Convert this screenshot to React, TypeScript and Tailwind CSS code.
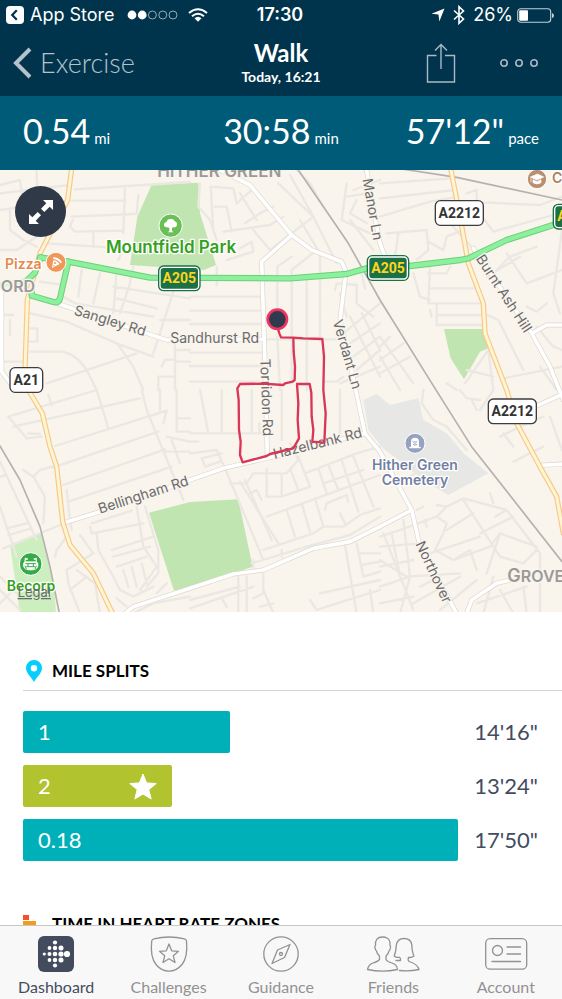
import type { ReactNode } from "react"
import clsx from "clsx"

const splits = [
    { label: "1", time: "14'16\"", seconds: 207, best: false },
    { label: "2", time: "13'24\"", seconds: 149, best: true },
    { label: "0.18", time: "17'50\"", seconds: 435, best: false },
]

const longest = Math.max(...splits.map((s) => s.seconds))

const stats = [
    { value: "0.54", unit: "mi" },
    { value: "30:58", unit: "min" },
    { value: "57'12\"", unit: "pace" },
]

// Small residential streets, one entry per map tile
const tiles = [
    {
        x: 0,
        y: 0,
        d: "M0 70L210 45M225 58L570 36M0 45L60 30L70 110L0 120M110 0V25L115 75L75 110M215 92H375M375 50L370 190M215 140L405 132M415 75L410 132M218 150L210 170L225 185L370 182M280 185V230M140 220L370 235L355 270M30 120V180L70 210L110 230M0 240H50L110 200M400 290L390 340L360 430M245 300L235 380M300 310L280 400M350 300L340 430M340 350L570 385M350 385L470 415M190 380L225 400L460 440M520 365L460 550M90 430L200 455L350 520L460 560M90 545H190Q240 560 265 610L290 660M140 640L410 550M355 525L400 590L430 660M525 520V660M525 620H475V660M0 435H40M30 450V495M80 475H112V515H80M120 335L190 345M0 575H70M525 540H570M525 575H570M485 590L495 570L525 568M480 450H570",
    },
    {
        x: 570,
        y: 0,
        d: "M30 40L25 110L60 150L80 210M62 50L130 55L140 100M75 110H110L125 185M62 50L70 180L80 210M150 70L200 150M165 160L210 130L250 110M100 185L240 165L280 140M185 60L140 100M190 180L240 240M110 270L190 245L185 215L150 235M300 15L370 140L440 280M265 40L370 140M240 240L370 140M262 420V290L305 260M305 640V300L380 240M262 500L270 660M330 150L390 250V500M350 330V660M0 380H210M0 422H210M0 462H210M0 548H215M0 588H215M225 508H440M0 635H210M320 0L360 40L400 110M470 40L455 150L540 190M470 80L530 70M490 60L570 30M480 150L550 240M500 90L480 130L530 160M435 360L440 340L500 345V400L550 440M450 370L470 440M80 290V345M510 290L525 355M460 490L570 400M480 520L570 460M490 560L570 500M500 600L570 540M480 440L570 620M450 640L570 590M515 430L570 540M400 635H440L460 620",
    },
    {
        x: 1140,
        y: 0,
        d: "M0 40L215 25M0 85L225 60M0 140L150 95L235 80M260 95L480 105L546 80M260 70L290 60V100M285 110L340 185L520 135M20 190L140 180L145 240L110 270M55 190L45 260M145 215L190 240L200 200L250 180M210 160L310 270M100 310L120 380L150 390M150 290L145 400M145 310H200L210 290M150 355H290M150 400H300M170 400V465H310M170 435H310M150 420L155 440M380 250L440 340L546 300M350 300L390 260L470 230M320 320L420 260M546 180L520 370L540 430M440 410L470 425L500 400M310 430L355 450L430 600M370 625L546 590M255 640L325 540L340 660M0 500L100 640M0 560L60 660M0 610L90 560M0 570L70 520M0 530L30 500M470 470L520 530L546 540M480 590L530 660M260 600L340 620M200 640L230 660",
    },
    {
        x: 0,
        y: 660,
        d: "M145 15L155 45M25 80L290 0M25 80L80 145L125 140M40 110L420 25M85 130L120 132M290 0L325 115M425 0L440 60L550 330M165 168L500 62L490 100M480 0V60M160 232L475 125M70 240L100 260L120 240L165 228M190 285L495 178M205 335L515 230M200 300L205 350L215 420M100 260L135 320L130 400M0 215L110 450M0 260L20 255M0 350L50 500M20 415L80 400M25 435L95 415M10 475L180 405M530 0V125H570M530 85H570M500 140L570 155M515 150L540 220M490 185H570M275 400L395 362M270 410L275 430L430 400M290 430L295 480L340 560L360 600L400 620L460 590M410 350L430 470L470 530L420 600M435 350L475 480V550L440 590M340 500L450 470M350 530L440 500M370 540L385 590M395 530L410 590M425 520L440 580M335 480L460 440M240 435L280 490L200 540L205 580L240 670M230 540L285 580L300 670M200 440L170 480L165 500M210 600L260 560M0 560L50 610M0 640L40 600M0 600L60 660M350 625L380 650M470 610L500 580M400 670L460 640L570 620",
    },
    {
        x: 570,
        y: 660,
        d: "M30 0L55 130M95 0V130M185 0V130M0 130H215M275 0V150M450 0V140M208 100V125M0 155H25M0 190L80 180L120 270L220 510M35 205L45 230L90 215M35 205L95 190M120 280H170L190 250H290L325 210L300 160M230 235V320H275V250M275 320L360 290L325 200M300 235L325 300M345 250L500 190L570 170M150 275L265 460M165 270L245 450M180 310L200 300L215 330M385 235L410 310M415 225L445 300M455 210L505 365M490 200L550 350M400 280L520 240M230 380L420 310L570 255M290 360L315 440M335 340L360 425M375 325L400 410M405 360L410 340L470 315L475 335M220 480L370 430L400 410L460 410L510 375L570 355M185 520L350 470L480 435L570 380M275 480V500M450 370L465 400M190 510V535M465 465L500 670M500 460L520 560L570 545M510 490H570M515 525L570 515M390 610L570 570M145 560V670M170 560V670M220 550V600L250 670M0 630L150 590M0 655L190 590M95 625L110 650M220 610L190 625M440 640L570 600M250 640L210 650M360 630L380 660L440 640M540 600L550 670",
    },
    {
        x: 1140,
        y: 660,
        d: "M130 0L125 40L160 90L200 110L260 180M0 70L60 80M240 0L260 25L300 30M340 0L300 60M275 30L290 60M360 140L420 110L490 80M370 130L400 170M400 215L490 170M510 80L546 180M0 440L60 420L170 380L200 350L250 325L380 360L480 490V670M170 380L200 400L190 430L165 480L220 510L330 470L360 430L470 470M250 330L360 500M200 420L280 370M345 380L380 360M220 510L270 480L290 540M300 430L400 380M360 500L430 520L470 480M360 430L320 550M330 310L340 340M110 360L130 350M60 280L150 220M0 510L80 560L240 550M10 430L100 660M35 430L60 560M70 390L90 560M0 470L120 460M0 530L100 510M150 490L300 440M0 590L90 560L60 670M100 640L240 560M120 590L180 560M180 660L290 570M340 560L310 670M290 640L440 590M360 600L400 670M430 590L440 670M0 640L100 620M170 345L195 350M135 390L140 410",
    },
]

const railways = [
    "M895 0L1045 220L1140 390L1305 655L1415 830L1686 1175",
    "M1200 -4L1370 22L1686 90",
    "M-5 820L60 930L120 1070L150 1190L178 1330",
]

const whiteRoads = [
    "M650 -5L750 45L875 195L935 240L1025 275L1038 305L1020 450L1065 650L1095 790L1140 845L1235 1020L1260 1130L1370 1330",
    "M875 195L785 275L795 580L802 860",
    "M170 400L500 510L600 508L785 508",
    "M5 360V605L35 645",
    "M188 1060L290 1028L570 930L670 895L820 860L1095 790",
    "M375 1330L400 1310L570 1255L700 1212L790 1200L940 1135L1050 1115L1140 1070L1235 1020",
    "M1400 1330L1415 1290L1490 1240L1530 1230",
    "M1420 235L1595 490L1650 590L1690 690M1595 490L1640 465H1690",
    "M1600 712L1690 672M1620 886L1690 882",
    "M1100 0L1115 90L1140 220L1170 300",
]

const yellowRoads = [
    "M215 -5L203 90L120 250L82 390L75 600L85 660L127 730L150 830L170 890L188 1055L210 1125L280 1210L340 1335",
    "M1352 -5L1380 140L1405 280L1450 400L1455 490L1520 660L1550 760L1620 890L1670 980L1690 1090",
]

const greenRoads = [
    "M120 262L205 275L450 323L870 325L1040 312L1110 292L1230 288L1380 270L1405 265L1520 210L1690 155",
    "M205 275L180 385Q176 400 160 396L95 377V365",
    "M122 262L105 308L80 332",
]

const route =
    "M832 470L838 490L843 502L880 503L881 545L885 590L884 630L878 635L855 640L850 645L790 641L720 642L712 655L716 690L717 780L722 815L720 855L728 877L800 858L810 852L880 835L897 805L893 750L895 700L891 642L929 642L934 668L935 740L940 780L937 815L973 818L977 730L970 660L972 560L967 507L910 505L880 503"

function Shield({ x, y, w, text, green }: { x: number; y: number; w: number; text: string; green?: boolean }) {
    return (
        <g transform={`translate(${x} ${y})`}>
            <rect width={w} height="74" rx="15" fill={green ? "#1c7046" : "#fff"} stroke={green ? "#1c7046" : "#3c3c40"} strokeWidth="4" />
            {green && <rect x="4" y="4" width={w - 8} height="66" rx="11" fill="none" stroke="#fff" strokeWidth="4" />}
            <text
                x={w / 2}
                y="51"
                textAnchor="middle"
                fontSize="42"
                fontWeight="700"
                fontFamily="Roboto, sans-serif"
                fill={green ? "#ffd51c" : "#333"}
            >
                {text}
            </text>
        </g>
    )
}

function RouteMap() {
    return (
        <svg viewBox="0 0 1686 1326" className="block h-auto w-full bg-[#f9f4ec]" role="img" aria-label="Walk route">
            {/* Parks and cemetery */}
            <path d="M455 44L595 38L600 130L648 285L612 300L390 285L412 140Z" fill="#c1e5b0" />
            <path d="M1332 477H1448L1465 535L1440 545L1392 628L1352 565Z" fill="#c1e5b0" />
            <path d="M447 1028L570 996L715 988L758 1190L570 1252L522 1262Z" fill="#c1e5b0" />
            <path d="M30 1125L125 1090L162 1240L168 1330H60Z" fill="#cdefc0" />
            <path d="M1090 690L1130 672L1170 705L1255 685L1270 750L1340 790L1390 850L1465 910L1345 975L1270 930L1150 835L1105 780Z" fill="#e7e7e5" />

            <g fill="none" strokeLinecap="round" strokeLinejoin="round">
                {tiles.map((t) => (
                    <path key={`${t.x}-${t.y}`} d={t.d} transform={`translate(${t.x} ${t.y})`} stroke="#ebe8e3" strokeWidth="7" />
                ))}
                {railways.map((d) => (
                    <path key={d} d={d} stroke="#b4b2b0" strokeWidth="5" />
                ))}
                <g stroke="#dcd7cf" strokeWidth="15">
                    {whiteRoads.map((d) => (
                        <path key={d} d={d} />
                    ))}
                </g>
                <g stroke="#fff" strokeWidth="11">
                    {whiteRoads.map((d) => (
                        <path key={d} d={d} />
                    ))}
                </g>
                <g stroke="#f6c88d" strokeWidth="16">
                    {yellowRoads.map((d) => (
                        <path key={d} d={d} />
                    ))}
                </g>
                <g stroke="#fff5ce" strokeWidth="9">
                    {yellowRoads.map((d) => (
                        <path key={d} d={d} />
                    ))}
                </g>
                <path d="M-5 345L80 332" stroke="#d3f5d3" strokeWidth="18" />
                <g stroke="#6bd07d" strokeWidth="19">
                    {greenRoads.map((d) => (
                        <path key={d} d={d} />
                    ))}
                </g>
                <g stroke="#8df09c" strokeWidth="13">
                    {greenRoads.map((d) => (
                        <path key={d} d={d} />
                    ))}
                </g>
            </g>

            {/* Street and place names */}
            <g
                fontFamily="Inter, sans-serif"
                fontSize="42"
                fontWeight="400"
                fill="#6b6b6d"
                stroke="#f9f4ec"
                strokeWidth="8"
                strokeLinejoin="round"
                paintOrder="stroke"
                textAnchor="middle"
            >
                <text transform="translate(326 466) rotate(17)">Sangley Rd</text>
                <text x="644" y="519">Sandhurst Rd</text>
                <text transform="translate(785 683) rotate(88)">Torridon Rd</text>
                <text transform="translate(1028 557) rotate(74)">Verdant Ln</text>
                <text transform="translate(1104 120) rotate(80)">Manor Ln</text>
                <text transform="translate(1500 378) rotate(57)">Burnt Ash Hill</text>
                <text transform="translate(434 988) rotate(-18)">Bellingham Rd</text>
                <text transform="translate(956 834) rotate(-14)">Hazelbank Rd</text>
                <text transform="translate(1288 1212) rotate(65)">Northover</text>
                <g fill="#9b9a99" fontWeight="600">
                    <text x="658" y="22" fontSize="51">HITHER GREEN</text>
                    <text x="54" y="367" fontSize="48">ORD</text>
                    <text x="1522" y="1237" fontSize="54" textAnchor="start">
                        G<tspan fontSize="48">ROVE</tspan>
                    </text>
                </g>
                <g fill="#35a01e" stroke="#fff" fontWeight="600">
                    <text x="513" y="250" fontSize="51">Mountfield Park</text>
                    <text x="93" y="1264">Becorp</text>
                </g>
                <g fill="#72809f" stroke="#fff" fontWeight="600">
                    <text x="1245" y="900">Hither Green</text>
                    <text x="1245" y="945">Cemetery</text>
                </g>
                <text x="70" y="296" fill="#e5894a" stroke="#fff" fontWeight="600">Pizza</text>
                <text x="1656" y="40" fill="#a9815d" stroke="#fff" fontWeight="600" textAnchor="start">Co</text>
                <text x="103" y="1281" fontSize="39" stroke="none" textDecoration="underline">Legal</text>
            </g>

            <Shield x={476} y={288} w={124} text="A205" green />
            <Shield x={1102} y={257} w={124} text="A205" green />
            <Shield x={1660} y={103} w={124} text="A205" green />
            <Shield x={1306} y={92} w={144} text="A2212" />
            <Shield x={1465} y={687} w={144} text="A2212" />
            <Shield x={30} y={593} w={98} text="A21" />

            {/* Park */}
            <g transform="translate(512 167)">
                <circle r="35" fill="#6abf57" stroke="#fff" strokeWidth="3" />
                <path d="M-4 6L-12 5Q-22 3-20-5Q-18-11-12-11Q-11-20-1-20Q9-22 12-13Q20-11 19-3Q18 5 8 5L4 7V16L9 20H-9L-4 16Z" fill="#fff" />
            </g>
            {/* Pizza slice */}
            <g transform="translate(168 277)">
                <circle r="30" fill="#f0975a" stroke="#fff" strokeWidth="3" />
                <path d="M-9-15Q10-15 18 0L14 3Q5-9-8-10ZM-8-6Q4-5 11 5L-12 17Z" fill="#fff" />
                <circle cx="-3" cy="2" r="3" fill="#f0975a" />
                <circle cx="-6" cy="10" r="2" fill="#f0975a" />
            </g>
            {/* Stadium */}
            <g transform="translate(92 1182)">
                <circle r="34" fill="#35ab48" stroke="#fff" strokeWidth="3" />
                <path d="M-17-18L-8-15L-17-12V-7H17V-12L9-15L17-18V-7Q23-5 22 5Q20 18 0 18Q-20 18-22 5Q-23-5-17-7Z" fill="#fff" stroke="#fff" strokeWidth="2" />
                <path d="M-16-1H16M-13 8H13M-8 0V8M8 0V8M-17 5L-13 15M17 5L13 15" fill="none" stroke="#35ab48" strokeWidth="3" />
            </g>
            {/* Tombstone */}
            <g transform="translate(1245 820)">
                <circle r="30" fill="#96a2c1" stroke="#fff" strokeWidth="3" />
                <path d="M-17 15V10H-12V-5Q-12-17 0-17Q12-17 12-5V10H17V15Z" fill="#fff" />
                <path d="M-7-6L-3-3M7-6L3-3M-6 3Q0 8 6 3M0-7V2" stroke="#96a2c1" strokeWidth="3" fill="none" />
            </g>
            {/* College */}
            <g transform="translate(1611 27)">
                <circle r="29" fill="#b98f6d" stroke="#fff" strokeWidth="3" />
                <path d="M-20-6L2-15L20-6L0 3ZM-12 2V11Q0 19 12 11V2L0 8ZM-18-3V10" fill="#fff" stroke="#fff" strokeWidth="2" />
            </g>

            <path d={route} fill="none" stroke="#d93658" strokeWidth="7" strokeLinejoin="round" strokeLinecap="round" />
            <circle cx="832" cy="448" r="29" fill="#2f3b4c" stroke="#ef3363" strokeWidth="8" />
        </svg>
    )
}

function StatusBar() {
    return (
        <div className="grid h-[30px] grid-cols-[1fr_auto_1fr] items-center pr-2 pl-1.5 font-['Inter',sans-serif] text-lg leading-none text-white">
            <div className="flex items-center">
                <a href="#app-store" className="flex items-center gap-1.5">
                    <svg viewBox="0 0 18 18" className="size-[18px]">
                        <rect width="18" height="18" rx="4" fill="#fff" />
                        <path d="M10.8 4.2L6.2 9L10.8 13.8" fill="none" stroke="#00344d" strokeWidth="2.2" />
                    </svg>
                    App Store
                </a>
                <svg viewBox="0 0 51 10" className="ml-3 h-2.5 w-[51px]">
                    {[5, 15.2, 25.4, 35.8, 46].map((cx, i) => (
                        <circle key={cx} cx={cx} cy="5" r={i < 2 ? 4.4 : 4} fill={i < 2 ? "#fff" : "none"} stroke="#b7c6ce" strokeWidth={i < 2 ? 0 : 0.8} />
                    ))}
                </svg>
                <svg viewBox="0 0 20 14" className="ml-2.5 h-3.5 w-5" fill="none" stroke="#fff" strokeWidth="2">
                    <path d="M1 5Q10-2.500 19 5M4 8.300Q10 3.300 16 8.300" />
                    <path d="M6.500 10.300Q10 7.300 13.500 10.300L10 13.800Z" fill="#fff" stroke="none" />
                </svg>
            </div>
            <span className="px-1 font-semibold">17:30</span>
            <div className="flex items-center justify-end">
                <svg viewBox="0 0 14 14" className="size-3.5" fill="#fff">
                    <path d="M13.500 .5L8.300 13.500L7.500 6.600L.5 5.800Z" />
                </svg>
                <svg viewBox="0 0 12 20" className="ml-2 h-5 w-3" fill="none" stroke="#fff" strokeWidth="1.6">
                    <path d="M1 5.500L10.500 14L6 18.300V1.700L10.500 6L1 14.500" />
                </svg>
                <span className="ml-2">26%</span>
                <svg viewBox="0 0 37 15" className="ml-1 h-[15px] w-[37px]">
                    <rect x=".7" y=".7" width="33" height="13.600" rx="3" fill="none" stroke="#c3d0d6" strokeWidth="1.1" />
                    <rect x="2.200" y="2.200" width="8.800" height="10.600" rx="1" fill="#fff" />
                    <path d="M35 5Q37 5.500 37 7.500T35 10Z" fill="#c3d0d6" />
                </svg>
            </div>
        </div>
    )
}

function NavBar() {
    return (
        <div className="grid h-[66px] grid-cols-[1fr_auto_1fr] items-center px-3 text-white">
            <button type="button" className="flex items-center gap-2 text-[27px] leading-8 font-light text-[#b3c2cb]">
                <svg viewBox="0 0 20 32" className="h-8 w-5" fill="none" stroke="currentColor" strokeWidth="4">
                    <path d="M18 2L4 16L18 30" />
                </svg>
                Exercise
            </button>
            <div className="text-center">
                <h1 className="text-2xl leading-7 font-bold">Walk</h1>
                <p className="text-sm leading-5 font-bold">Today, 16:21</p>
            </div>
            <div className="flex items-center justify-end gap-11 pr-3 text-[#a9bac5]">
                <button type="button" aria-label="Share">
                    <svg viewBox="0 0 30 40" className="h-10 w-[30px]" fill="none" stroke="currentColor" strokeWidth="1.4">
                        <path d="M10.500 12.500H1.500V39H28.500V12.500H19M15 26V1.500M9 7.500L15 1.500L21 7.500" />
                    </svg>
                </button>
                <button type="button" aria-label="More">
                    <svg viewBox="0 0 38 10" className="h-2.5 w-[38px]" fill="none" stroke="currentColor" strokeWidth="1.6">
                        <circle cx="4" cy="5" r="3.200" />
                        <circle cx="19" cy="5" r="3.200" />
                        <circle cx="34" cy="5" r="3.200" />
                    </svg>
                </button>
            </div>
        </div>
    )
}

function Splits() {
    return (
        <section className="pt-11 pl-[23px]">
            <div className="border-b border-[#d3d4d6] pb-1">
                <h2 className="flex h-[30px] items-center gap-2.5 text-[17px] font-bold text-black">
                    <svg viewBox="0 0 16 22" className="ml-[3px] h-[22px] w-4">
                        <path d="M8 0a8 8 0 0 1 8 8C16 13.500 10.500 17 8 22C5.500 17 0 13.500 0 8A8 8 0 0 1 8 0ZM8 5a3.200 3.200 0 1 0 0 6.400A3.200 3.200 0 1 0 8 5Z" fill="#05cdfc" fillRule="evenodd" />
                    </svg>
                    MILE SPLITS
                </h2>
            </div>
            <ol className="mt-5 flex flex-col gap-3 pr-6 text-[22px] leading-none">
                {splits.map((s) => (
                    <li key={s.label} className="flex items-center gap-4">
                        <div className="flex-1">
                            <div
                                className={clsx(
                                    "flex h-[42px] items-center justify-between rounded-xs px-[15px] text-white",
                                    s.best ? "bg-[#b1c430]" : "bg-[#00b0b9]"
                                )}
                                style={{ width: `${(s.seconds / longest) * 100}%` }}
                            >
                                {s.label}
                                {s.best && (
                                    <svg viewBox="0 0 28 27" className="h-[27px] w-7" fill="#fff" stroke="#fff" strokeLinejoin="round">
                                        <path d="M14 1L17.600 9.900L27.200 10.600L19.800 16.600L22.200 26L14 21L5.800 26L8.200 16.600L.8 10.600L10.400 9.900Z" />
                                    </svg>
                                )}
                            </div>
                        </div>
                        <span className="w-16 text-right text-[#434c5e]">{s.time}</span>
                    </li>
                ))}
            </ol>
        </section>
    )
}

const tabs: { label: string; icon: ReactNode }[] = [
    {
        label: "Dashboard",
        icon: (
            <>
                <rect x="6" width="36" height="36" rx="6" fill="#434c5e" stroke="none" />
                <g fill="#fff" stroke="none">
                    <circle cx="12.300" cy="18" r="1.600" />
                    <circle cx="17.500" cy="12" r="1.900" />
                    <circle cx="17.500" cy="18" r="2" />
                    <circle cx="17.500" cy="24" r="1.900" />
                    <circle cx="23" cy="6.500" r="2.100" />
                    <circle cx="23" cy="12" r="2.200" />
                    <circle cx="23" cy="18" r="2.300" />
                    <circle cx="23" cy="24" r="2.200" />
                    <circle cx="23" cy="29.500" r="2.100" />
                    <circle cx="29" cy="12" r="2.500" />
                    <circle cx="29" cy="18" r="2.600" />
                    <circle cx="29" cy="24" r="2.500" />
                    <circle cx="35" cy="18" r="3.100" />
                </g>
            </>
        ),
    },
    {
        label: "Challenges",
        icon: (
            <>
                <path d="M6.700 5Q7 3.300 9 2.800Q24-.8 39.500 2.800Q41.300 3.300 41.500 5Q43 21 37 28.500Q31.500 35.200 24 35.200T11 28.500Q5 21 6.700 5Z" />
                <path d="M24 8L26.700 14.800L33.500 15.300L28.300 19.800L30 26.500L24 22.800L18 26.500L19.700 19.800L14.500 15.300L21.300 14.800Z" />
            </>
        ),
    },
    {
        label: "Guidance",
        icon: (
            <>
                <circle cx="24" cy="18" r="17.200" />
                <path d="M33 8.500L20.500 14L15 27.500L27.500 21.500Z" />
                <circle cx="24" cy="18" r="1.500" />
            </>
        ),
    },
    {
        label: "Friends",
        icon: (
            <>
                <path d="M13.500 1C8.500 1 6 4 6.500 9.500Q5.300 10 6.200 12.500Q6.500 14.500 7.500 14.800Q8 18 10.500 20V23.500Q9 25.500 4 27Q-.5 28.500-1.500 33.500Q6 35.200 13.500 35.200Q21 35.200 28.500 33.500Q28 28.500 23 27Q18 25.500 17 23.500V20Q19.500 18 20 14.800Q21 14.500 21.300 12.500Q22 10 21 9.500Q21.500 4 18 2Q16.500 1 13.500 1Z" />
                <path d="M27 24.500H31.500Q32 22.500 30.500 21.300Q27 21.800 25.200 20Q27 16 27.300 9Q28.500 2.500 35 2.500Q42 2.500 42.800 9Q43 16 45 20Q42.500 22 39.500 21.300Q38.500 24 40 25.500Q48.500 28 50 33.500Q41 35.500 30.500 34.500" />
            </>
        ),
    },
    {
        label: "Account",
        icon: (
            <>
                <rect x="3.700" y="2.700" width="41" height="30.500" rx="4.500" />
                <circle cx="15.500" cy="14.500" r="5" />
                <path d="M25 11H38.500M25 18H38.500M10 25.500H38.500" />
            </>
        ),
    },
]

export default function App() {
    return (
        <div className="flex h-screen flex-col bg-white font-['Lato',sans-serif]">
            <header className="bg-[#00344d]">
                <StatusBar />
                <NavBar />
            </header>

            <dl className="grid h-[74px] shrink-0 grid-cols-[1fr_auto_1fr] items-center bg-[#005b79] px-[23px] pb-1 text-white">
                {stats.map((s) => (
                    <div key={s.unit} className="flex items-baseline gap-1 last:justify-self-end">
                        <dd className="text-[34px] leading-10">{s.value}</dd>
                        <dt className="text-[15px]">{s.unit}</dt>
                    </div>
                ))}
            </dl>

            <main className="min-h-0 flex-1 overflow-y-auto [scrollbar-width:none]">
                <div className="relative">
                    <RouteMap />
                    <button
                        type="button"
                        aria-label="Expand map"
                        className="absolute top-4 left-[15px] flex size-[51px] items-center justify-center rounded-full bg-[#303947]"
                    >
                        <svg viewBox="0 0 26 26" className="size-[26px]" fill="#fff">
                            <path d="M15 1H25V11L21.700 7.700L16.300 13L13 9.700L18.300 4.300ZM1 15L4.300 18.300L9.700 13L13 16.300L7.700 21.700L11 25H1Z" />
                        </svg>
                    </button>
                </div>

                <Splits />

                <section className="pt-12 pb-6 pl-[23px]">
                    <h2 className="flex h-[30px] items-center gap-3 text-[17px] font-bold text-black">
                        <svg viewBox="0 0 17 18" className="h-[18px] w-[17px]">
                            <rect width="6" height="5" fill="#f4502a" />
                            <rect y="6" width="13" height="5" fill="#f79a1c" />
                            <rect y="12" width="17" height="5" fill="#fcc630" />
                        </svg>
                        TIME IN HEART RATE ZONES
                    </h2>
                </section>
            </main>

            <nav className="grid h-[74px] shrink-0 grid-cols-5 border-t border-[#c6c7c9] bg-[#f8f8f8]">
                {tabs.map((t, i) => (
                    <a
                        key={t.label}
                        href={`#${t.label.toLowerCase()}`}
                        className={clsx("flex flex-col items-center gap-1 pt-2.5 text-base leading-[22px]", i === 0 ? "text-[#434c5e]" : "text-[#929292]")}
                    >
                        <svg viewBox="0 0 48 36" className="h-9 w-12 overflow-visible" fill="none" stroke="currentColor" strokeWidth="1.3" strokeLinejoin="round" strokeLinecap="round">
                            {t.icon}
                        </svg>
                        {t.label}
                    </a>
                ))}
            </nav>
        </div>
    )
}
